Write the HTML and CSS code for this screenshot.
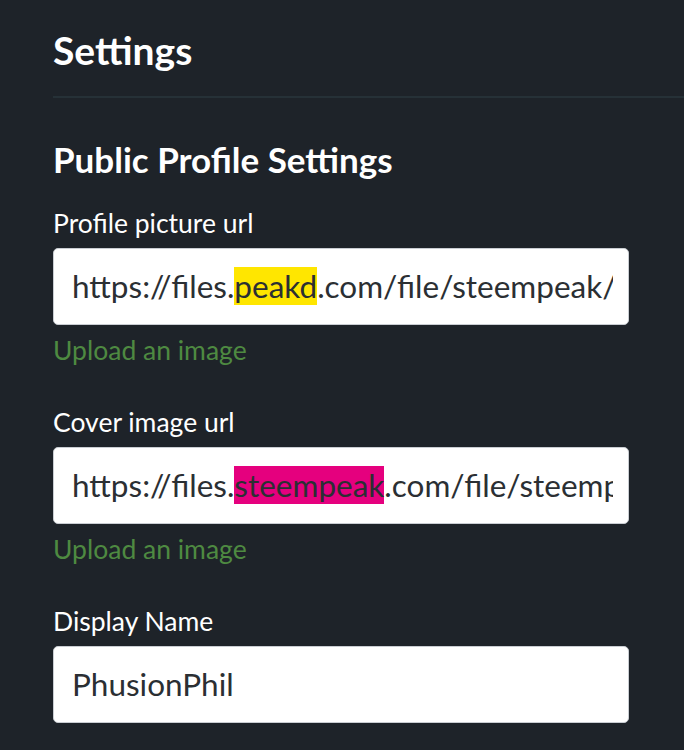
FILE: index.html
```html
<!DOCTYPE html>
<html lang="en">
<head>
    <meta charset="UTF-8">
    <meta name="viewport" content="width=device-width, initial-scale=1.0">
    <title>Settings</title>
    <link rel="stylesheet" href="styles.css">
</head>
<body>

<div class="page">
    <h1 class="page-title">Settings</h1>

    <section class="section">
        <h2 class="section-title">Public Profile Settings</h2>

        <div class="field">
            <label class="field-label">Profile picture url</label>
            <div class="input"><span class="input-value">https://files.<mark class="hl-yellow">peakd</mark>.com/file/steempeak/phusionphil/profile.png</span></div>
            <a class="upload-link" href="#">Upload an image</a>
        </div>

        <div class="field">
            <label class="field-label">Cover image url</label>
            <div class="input"><span class="input-value">https://files.<mark class="hl-pink">steempeak</mark>.com/file/steempeak/phusionphil/cover.png</span></div>
            <a class="upload-link" href="#">Upload an image</a>
        </div>

        <div class="field">
            <label class="field-label">Display Name</label>
            <div class="input"><span class="input-value">PhusionPhil</span></div>
        </div>
    </section>
</div>

</body>
</html>
```

FILE: styles.css
```css
body {
    margin: 0;
    background-color: #1e2329;
    font-family: Lato, "Liberation Sans", sans-serif;
    color: #ffffff;
    overflow: hidden;
}
.page {
    padding: 26px 0 0 53px;
}
.page-title {
    margin: 0;
    font-size: 39px;
    font-weight: 700;
    line-height: 48px;
    padding-bottom: 22px;
    border-bottom: 2px solid #263137;
}
.section {
    width: 576px;
    padding-top: 40px;
}
.section-title {
    margin: 0 0 26px 0;
    font-size: 35px;
    font-weight: 700;
    line-height: 42px;
}
.field {
    margin-bottom: 38px;
}
.field-label {
    display: block;
    font-size: 26.5px;
    line-height: 34px;
    margin-bottom: 8px;
}
.input {
    height: 75px;
    padding: 0 15px 0 18px;
    background-color: #ffffff;
    border: 1px solid #c9cdd2;
    border-radius: 5px;
    color: #2b2f33;
    font-size: 31.5px;
}
.input-value {
    display: block;
    line-height: 75px;
    white-space: nowrap;
    overflow: hidden;
}
.hl-yellow {
    background-color: #ffe600;
    color: inherit;
}
.hl-pink {
    background-color: #e5007e;
    color: inherit;
}
.upload-link {
    display: block;
    margin-top: 8px;
    font-size: 26.5px;
    line-height: 34px;
    color: #4e8a41;
    text-decoration: none;
}
```
